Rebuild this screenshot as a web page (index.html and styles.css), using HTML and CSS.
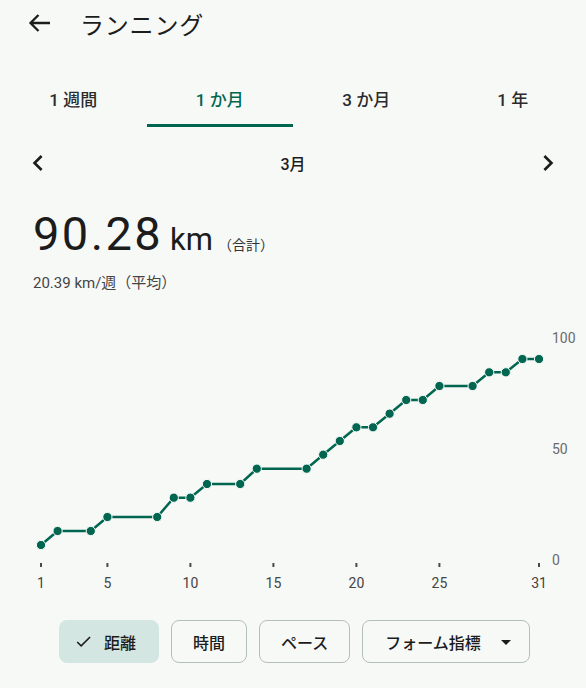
FILE: index.html
```html
<!DOCTYPE html>
<html lang="ja">
<head>
    <meta charset="UTF-8">
    <meta name="viewport" content="width=device-width, initial-scale=1.0">
    <title>ランニング</title>
    <link rel="stylesheet" href="styles.css">
</head>
<body>
    <header class="appbar">
        <svg class="back" viewBox="0 0 24 20" width="24" height="20"><path d="M23 10H3.5M11.5 2L3.5 10l8 8"/></svg>
        <h1>ランニング</h1>
    </header>

    <nav class="tabs">
        <div class="tab">1 週間</div>
        <div class="tab active">1 か月</div>
        <div class="tab">3 か月</div>
        <div class="tab">1 年</div>
    </nav>

    <div class="month-nav">
        <svg viewBox="0 0 24 24" width="32" height="32"><path d="M15.41 7.41L14 6l-6 6 6 6 1.41-1.41L10.83 12z"/></svg>
        <span class="month">3月</span>
        <svg viewBox="0 0 24 24" width="32" height="32"><path d="M8.59 16.59L10 18l6-6-6-6-1.41 1.41L13.17 12z"/></svg>
    </div>

    <section class="summary">
        <div class="total">
            <span class="value">90.28</span>
            <span class="unit">km</span>
            <span class="note">（合計）</span>
        </div>
        <div class="average">20.39 km/週（平均）</div>
    </section>

    <svg class="chart" viewBox="0 0 586 300" width="586" height="300">
        <g class="y-labels">
            <text x="552" y="43">100</text>
            <text x="552" y="154">50</text>
            <text x="552" y="265">0</text>
        </g>
        <g class="ticks">
            <rect x="40" y="263" width="2" height="4"/>
            <rect x="106.4" y="263" width="2" height="4"/>
            <rect x="189.4" y="263" width="2" height="4"/>
            <rect x="272.4" y="263" width="2" height="4"/>
            <rect x="355.4" y="263" width="2" height="4"/>
            <rect x="438.4" y="263" width="2" height="4"/>
            <rect x="538" y="263" width="2" height="4"/>
        </g>
        <g class="x-labels">
            <text x="41" y="288">1</text>
            <text x="107.4" y="288">5</text>
            <text x="190.4" y="288">10</text>
            <text x="273.4" y="288">15</text>
            <text x="356.4" y="288">20</text>
            <text x="439.4" y="288">25</text>
            <text x="539" y="288">31</text>
        </g>
        <polyline class="line" points="41,245 57.6,231 90.8,231 107.4,217 157.2,217 173.8,197.7 190.4,197.7 207,184 240.2,184 256.8,168.7 306.6,168.7 323.2,154.7 339.8,141 356.4,127.3 373,127.3 389.6,113.7 406.2,100 422.8,100 439.4,86 472.6,86 489.2,72.3 505.8,72.3 522.4,59 539,59"/>
        <g class="dots">
            <circle cx="41" cy="245" r="4.6"/>
            <circle cx="57.6" cy="231" r="4.6"/>
            <circle cx="90.8" cy="231" r="4.6"/>
            <circle cx="107.4" cy="217" r="4.6"/>
            <circle cx="157.2" cy="217" r="4.6"/>
            <circle cx="173.8" cy="197.7" r="4.6"/>
            <circle cx="190.4" cy="197.7" r="4.6"/>
            <circle cx="207" cy="184" r="4.6"/>
            <circle cx="240.2" cy="184" r="4.6"/>
            <circle cx="256.8" cy="168.7" r="4.6"/>
            <circle cx="306.6" cy="168.7" r="4.6"/>
            <circle cx="323.2" cy="154.7" r="4.6"/>
            <circle cx="339.8" cy="141" r="4.6"/>
            <circle cx="356.4" cy="127.3" r="4.6"/>
            <circle cx="373" cy="127.3" r="4.6"/>
            <circle cx="389.6" cy="113.7" r="4.6"/>
            <circle cx="406.2" cy="100" r="4.6"/>
            <circle cx="422.8" cy="100" r="4.6"/>
            <circle cx="439.4" cy="86" r="4.6"/>
            <circle cx="472.6" cy="86" r="4.6"/>
            <circle cx="489.2" cy="72.3" r="4.6"/>
            <circle cx="505.8" cy="72.3" r="4.6"/>
            <circle cx="522.4" cy="59" r="4.6"/>
            <circle cx="539" cy="59" r="4.6"/>
        </g>
    </svg>

    <div class="chips">
        <div class="chip selected">
            <svg viewBox="0 0 24 24" width="19" height="19"><path d="M9 16.17L4.83 12l-1.42 1.41L9 19 21 7l-1.41-1.41z"/></svg>
            <span>距離</span>
        </div>
        <div class="chip">時間</div>
        <div class="chip">ペース</div>
        <div class="chip dropdown">
            <span>フォーム指標</span>
            <svg viewBox="0 0 24 24" width="24" height="24"><path d="M7 10l5 5 5-5z"/></svg>
        </div>
    </div>
</body>
</html>
```

FILE: styles.css
```css
* {
    margin: 0;
    padding: 0;
    box-sizing: border-box;
    font-family: Roboto, 'Noto Sans CJK JP', sans-serif;
}

body {
    background-color: #f7f9f7;
    color: #1c1c1c;
    width: 586px;
    height: 688px;
    overflow: hidden;
}

.appbar {
    height: 46px;
    display: flex;
    align-items: center;
    padding-left: 27px;
    gap: 29px;
}

.appbar .back {
    fill: none;
    stroke: #1c1c1c;
    stroke-width: 2.3;
}

h1 {
    font-size: 24px;
    font-weight: 400;
    letter-spacing: 0.8px;
    color: #1c1c1c;
}

.tabs {
    margin-top: 26px;
    display: flex;
}

.tab {
    flex: 1;
    height: 55px;
    display: flex;
    align-items: center;
    justify-content: center;
    font-size: 17px;
    font-weight: 500;
    color: #2b2b2b;
    border-bottom: 3px solid transparent;
}

.tab.active {
    color: #00664f;
    border-bottom-color: #00664f;
}

.month-nav {
    height: 72px;
    display: flex;
    align-items: center;
    justify-content: space-between;
    padding: 0 22px;
}

.month-nav svg {
    fill: #1c1c1c;
}

.month {
    font-size: 16px;
    font-weight: 500;
}

.summary {
    margin-top: 7px;
    padding-left: 33px;
}

.total {
    display: flex;
    align-items: baseline;
    line-height: 56px;
}

.value {
    font-size: 47px;
    font-weight: 400;
    letter-spacing: 2.4px;
}

.unit {
    font-size: 31px;
    margin-left: 7px;
}

.note {
    font-size: 14px;
    margin-left: 5px;
    color: #333;
}

.average {
    font-size: 15px;
    line-height: 20px;
    color: #444;
}

.chart {
    display: block;
    margin-top: 7px;
}

.y-labels text {
    font-size: 14px;
    fill: #6b6b6b;
}

.x-labels text {
    font-size: 14px;
    fill: #444;
    text-anchor: middle;
}

.ticks rect {
    fill: #4a4a4a;
}

.line {
    fill: none;
    stroke: #00664f;
    stroke-width: 2.5;
}

.dots circle {
    fill: #00664f;
    stroke: #f7f9f7;
    stroke-width: 1;
}

.chips {
    margin-top: 20px;
    padding-left: 59px;
    display: flex;
    gap: 12px;
}

.chip {
    height: 43px;
    display: flex;
    align-items: center;
    padding: 0 21px;
    border: 1.5px solid #b3c0bb;
    border-radius: 8px;
    font-size: 16px;
    font-weight: 500;
    color: #1c1c1c;
}

.chip.selected {
    background-color: #d3e6e1;
    border-color: #d3e6e1;
    padding-left: 14px;
    padding-right: 22px;
    gap: 11px;
}

.chip.dropdown {
    padding-left: 22px;
    padding-right: 11px;
    gap: 13px;
}

.chip svg {
    fill: #1c1c1c;
}
```
